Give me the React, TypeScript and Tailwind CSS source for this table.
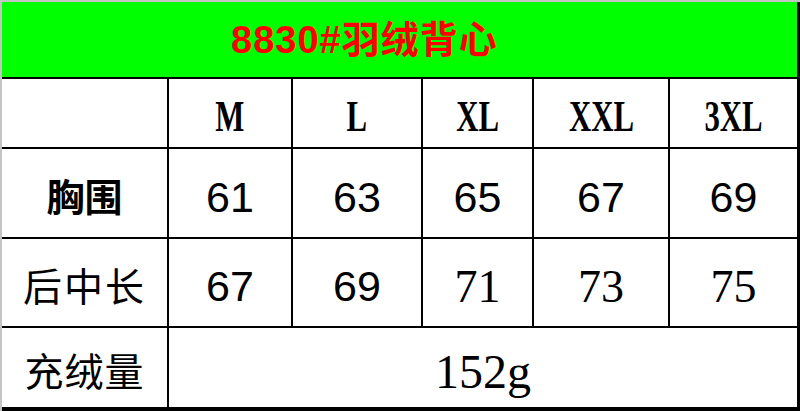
const sans = "font-['Liberation_Sans','Noto_Sans_CJK_SC',sans-serif]"
const serif = "font-['Liberation_Serif','Noto_Sans_CJK_SC',serif]"
const cjk = "font-['Noto_Sans_CJK_SC',sans-serif]"

const sizes = ["M", "L", "XL", "XXL", "3XL"]

function Cell({ children, className = "" }: { children?: React.ReactNode; className?: string }) {
  return <div className={`flex items-center justify-center bg-white text-black ${className}`}>{children}</div>
}

export default function App() {
  return (
    <div className="grid h-[411px] w-[800px] grid-cols-[165px_122px_128px_109px_134px_127px] grid-rows-[75px_68px_88px_87px_79px] gap-[2px] border-l-2 border-t-2 border-[#c4c4c4] bg-black pb-[4px] pr-[3px]">
      <div className="col-span-6 flex items-center bg-[#00ff00] pl-[229px]">
        <span className={`${sans} text-[38px] font-bold leading-none tracking-[1px] text-[#ff0000]`}>8830#羽绒背心</span>
      </div>

      <Cell />
      {sizes.map((s) => (
        <Cell key={s} className="pt-2">
          <span className={`${serif} inline-block scale-x-[0.7] text-[44px] font-bold leading-none`}>{s}</span>
        </Cell>
      ))}

      <Cell className="pt-1">
        <span className={`${cjk} text-[38px] font-bold leading-none`}>胸围</span>
      </Cell>
      {["61", "63", "65", "67", "69"].map((n) => (
        <Cell key={n} className="pt-2">
          <span className={`${sans} text-[43px] leading-none`}>{n}</span>
        </Cell>
      ))}

      <Cell className="pt-1">
        <span className={`${cjk} text-[39px] leading-none tracking-[2px]`}>后中长</span>
      </Cell>
      {["67", "69"].map((n) => (
        <Cell key={n} className="pt-2">
          <span className={`${sans} text-[43px] leading-none`}>{n}</span>
        </Cell>
      ))}
      {["71", "73", "75"].map((n) => (
        <Cell key={n} className="pt-2">
          <span className={`${serif} text-[46px] leading-none`}>{n}</span>
        </Cell>
      ))}

      <Cell className="pt-1">
        <span className={`${cjk} text-[39px] leading-none tracking-[1px]`}>充绒量</span>
      </Cell>
      <Cell className="col-span-5 pt-2">
        <span className={`${serif} text-[48px] leading-none`}>152g</span>
      </Cell>
    </div>
  )
}
